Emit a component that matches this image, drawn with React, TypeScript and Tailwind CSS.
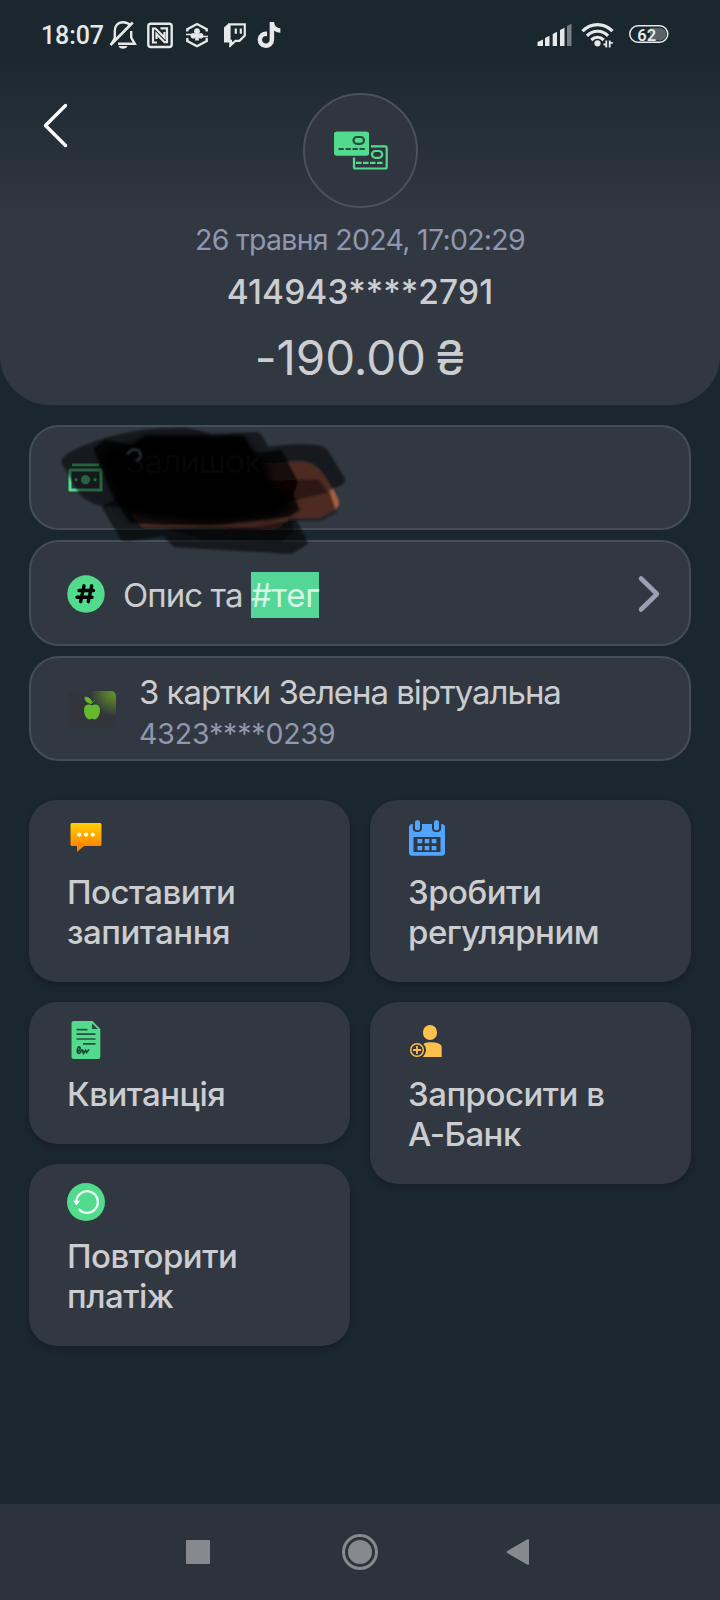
import type { ReactNode } from "react";
import { FaTiktok, FaTwitch } from "react-icons/fa";

const StatusBar = () => {
  return (
    <div className="flex h-[70px] items-center pl-[41px] pr-[50px] text-[#e6e8e9]">
      <span className="font-['Roboto',sans-serif] text-[25px] leading-[28px] font-medium tracking-[-0.1px] w-[66px] pt-[2px]">
        18:07
      </span>
      {/* Iconos de notificaciones */}
      <svg width="32" height="32" viewBox="107 19 32 32" fill="none" stroke="currentColor" strokeWidth="2.4">
        <path d="M131 25.500C128.500 23.200 126 22.200 123 22.200C117.600 22.200 114.800 26.200 114.800 31V38L112 43.400" />
        <path d="M131.200 31V37.500L134.800 43.800H118" />
        <path d="M110.500 45L132.800 22.500" strokeWidth="2.700" />
        <path d="M118.500 46H127.500C126.500 49.600 119.500 49.600 118.500 46Z" fill="currentColor" stroke="none" />
      </svg>
      <svg className="ml-[6px]" width="30" height="30" viewBox="145 19 30 30" fill="none" stroke="currentColor">
        <rect x="148.300" y="22.800" width="23.400" height="23.200" rx="2.500" strokeWidth="2.400" />
        <path d="M157 41.500H153V27.500H155.500L164.500 36.500V31" strokeWidth="2.200" />
        <path d="M160.500 27.300H167V41.200H164.500L156.500 33V38" strokeWidth="2.200" />
      </svg>
      <svg className="ml-[8px]" width="28" height="28" viewBox="183 20 28 28" fill="none" stroke="currentColor">
        <path d="M187.300 30.500V28.200L197 23L206.700 28.200V30.500M187.300 37V40L197 45.200L206.700 40V37" strokeWidth="2.400" />
        <g fill="currentColor" stroke="none">
          <circle cx="197" cy="30.200" r="2.900" />
          <circle cx="193.400" cy="34.800" r="2.800" />
          <circle cx="200.600" cy="34.800" r="2.800" />
          <path d="M196 31H198L199 39.500H195ZM186 32.800H192V34.300H186ZM202 34.800H208V36.300H202Z" />
        </g>
      </svg>
      <svg className="ml-[11px]" width="26" height="28" viewBox="220 20 26 28" fill="none" stroke="currentColor">
        <path d="M227.500 23.300H242.800V34.500L237.500 39.800H233.500L229 44V39.800H227.500Z" strokeWidth="2.200" />
        <path d="M227 22L222 26.500V41.500H227.200V46.700L233 41H227Z" fill="currentColor" stroke="none" />
        <path d="M233.800 27.500V32.800M238.800 27.500V32.800" strokeWidth="2.200" />
      </svg>
      <FaTiktok className="ml-[8px]" size={26} />

      <svg className="ml-auto" width="136" height="30" viewBox="534 20 136 30" fill="none">
        <g fill="currentColor">
          <path d="M537.500 42L543 39.500V46H537.500ZM545 38L549.500 35.700V46H545ZM552.700 34L557 31.700V46H552.700ZM560 30L564.500 27.700V46H560Z" />
          <path d="M567 26L571.500 23.700V46H567Z" opacity=".45" />
          <circle cx="597.500" cy="43.300" r="3.100" />
        </g>
        <path
          d="M582.500 31.200C591 22.400 604 22.400 612.500 31.200M587 35.800C593 29.700 602 29.700 608 35.800M591.300 40C595 36.500 600 36.500 603.700 40"
          stroke="currentColor"
          strokeWidth="3.200"
        />
        <path d="M606.300 40.500V47.500M609.700 40.500V47.500M603.500 44.500H606.300M609.700 42.800H612.800" stroke="currentColor" strokeWidth="1.800" />
        <path d="M650 28H660A6.300 6.300 0 0 1 660 40.600H650Z" fill="#5a6268" />
        <rect x="629.800" y="25.800" width="38" height="16.400" rx="8.200" stroke="currentColor" strokeWidth="1.500" />
        <text x="637.300" y="40.800" fill="currentColor" fontFamily="Roboto, sans-serif" fontSize="16.500" fontWeight="600">
          62
        </text>
      </svg>
    </div>
  );
};

const CardsIcon = () => {
  return (
    <svg className="mb-[2px]" width="56" height="40" viewBox="333 130 56 40" fill="none" stroke="#52db8c">
      <rect x="354" y="146.300" width="32.700" height="22.200" rx="1.500" strokeWidth="2.200" />
      <rect x="372" y="151" width="10.200" height="6.800" rx="3.400" strokeWidth="2.200" />
      <path d="M356 162.800H384" strokeWidth="2.200" strokeDasharray="5.500 1.500" />
      <rect x="333.200" y="130.700" width="36.800" height="25.700" rx="3" fill="#52db8c" stroke="#30363f" strokeWidth="2" />
      <rect x="334.200" y="131.700" width="34.800" height="23.700" rx="2.500" fill="#52db8c" stroke="none" />
      <rect x="353.500" y="137" width="10.500" height="6.800" rx="3.400" stroke="#294b45" strokeWidth="2.200" />
      <path d="M338.500 149H366" stroke="#294b45" strokeWidth="2.200" strokeDasharray="5.300 1.700" />
    </svg>
  );
};

const Header = () => {
  return (
    <header className="flex h-[405px] flex-col rounded-b-[50px] bg-linear-to-b from-[#1b272e] from-[50px] to-[#313841] to-[225px]">
      <StatusBar />
      <div className="mt-[23px] grid h-[115px] grid-cols-[303px_115px]">
        <button className="ml-[42px] mt-[9px] h-[48px] w-[28px]">
          <svg width="28" height="48" viewBox="42 102 28 48" fill="none" stroke="#fff" strokeWidth="3.4" strokeLinecap="round" strokeLinejoin="round">
            <path d="M65.500 105.500L45.500 125.500L65.500 145.500" />
          </svg>
        </button>
        <div className="flex items-center justify-center rounded-full border-2 border-[#4a505c] bg-[#30363f]">
          <CardsIcon />
        </div>
      </div>
      <p className="mt-[14px] text-center text-[28.5px] leading-[36px] tracking-[-0.7px] text-[#9097ae]">
        26 травня 2024, 17:02:29
      </p>
      <p className="mt-[14px] text-center text-[33.5px] leading-[40px] font-medium tracking-[0.1px]">
        414943****2791
      </p>
      <p className="mt-[18px] text-center text-[47.5px] leading-[56px] tracking-[-0.1px] [word-spacing:-4px]">
        -190.00 ₴
      </p>
    </header>
  );
};

const Row = ({ children }: { children: ReactNode }) => {
  return (
    <div className="flex h-[105.3px] items-center rounded-[30px] border-2 border-[#454d57] bg-[#313841] pl-[36px] pr-[28px]">
      {children}
    </div>
  );
};

const MoneyIcon = () => {
  return (
    <svg width="38" height="38" viewBox="0 0 38 38" fill="#52db8c">
      <rect x="5" y="4.500" width="27" height="2.800" />
      <path fillRule="evenodd" d="M3 9.500H34Q35.500 9.500 35.500 11V31Q35.500 32.500 34 32.500H3Q1.500 32.500 1.500 31V11Q1.500 9.500 3 9.500ZM4.500 12.500V29.500H32.500V12.500Z" />
      <circle cx="18.500" cy="20.700" r="4.600" />
      <circle cx="9" cy="20.700" r="1.600" />
      <circle cx="28" cy="20.700" r="1.600" />
    </svg>
  );
};

/* Trazos de marcador que tapan el saldo */
const Scribble = () => {
  return (
    <svg className="pointer-events-none absolute -top-[15px] -left-[9px]" width="350" height="150" viewBox="0 0 1050 450">
      <defs>
        <filter id="soft" x="-20%" y="-20%" width="140%" height="140%">
          <feGaussianBlur stdDeviation="2.500" />
        </filter>
        <filter id="softer" x="-20%" y="-20%" width="140%" height="140%">
          <feGaussianBlur stdDeviation="12" />
        </filter>
      </defs>
      <g filter="url(#soft)">
        <path d="M124 158Q125 140 150 125Q220 90 300 72Q400 50 500 54Q545 60 575 75L700 66Q722 66 728 80L745 110Q820 98 890 105Q915 107 926 125L975 205Q978 218 965 225Q900 255 830 270L700 290L255 290Q215 285 180 255Z" fill="#000" opacity=".54" />
        <path d="M245 290L300 385Q305 395 330 392Q380 388 430 378L462 412L760 428Q800 435 820 430L865 400L820 312L700 250L330 240Z" fill="#000" opacity=".56" />
        <path d="M780 318L895 325L955 290L948 308L905 333H805Z" fill="#14191d" opacity=".6" />
        <path d="M720 160L850 154Q890 162 912 195L955 268Q962 288 940 303L895 324H810L775 354Q740 362 700 352H375Q350 345 335 310L500 200Z" fill="#4e2c22" />
        <path d="M928 240L940 238L956 270Q960 288 946 298Z" fill="#a5603f" />
        <path d="M218 115L255 90L340 105L375 78L672 78L700 130L785 120L835 215L820 255L840 300L810 320L600 345L530 345H430L330 340L300 290Q260 240 250 180Z" fill="#000" opacity=".72" />
        <path d="M700 212L895 208L923 248L820 272L700 290Z" fill="#000" opacity=".42" />
        <path d="M430 355L700 350L818 330L820 365L785 395L550 390Z" fill="#000" opacity=".45" />
      </g>
      <path d="M240 145L265 105L340 112L380 85L665 85L700 130L745 175L740 220L810 255L825 295L760 325L560 340L400 325L310 300Z" fill="#000" opacity=".9" filter="url(#softer)" />
      <path d="M300 120L380 85H660L730 170L770 300L560 330L330 300Z" fill="#000" filter="url(#softer)" />
      <text x="314" y="190" fontSize="100" letterSpacing="-3" fill="#090b0d" opacity=".6">
        Залишок
      </text>
      <path d="M321 133Q333 117 347 119Q362 121 362 139Q361 149 348 152" fill="none" stroke="#33393d" strokeWidth="6" filter="url(#soft)" />
    </svg>
  );
};

const Details = () => {
  return (
    <section className="relative mx-[29px] mt-5 flex flex-col gap-[10.2px]">
      <Row>
        <MoneyIcon />
      </Row>
      <Row>
        <svg className="mt-px" width="38" height="38" viewBox="0 0 38 38" fill="none">
          <circle cx="19" cy="19" r="18.700" fill="#52db8c" />
          <path d="M17 10.800L13.600 26.700M24.700 10.800L21.300 26.700M12 15.500H26.500M10 22.300H25" stroke="#000" strokeWidth="3.400" strokeLinecap="round" />
        </svg>
        <p className="ml-[18px] mt-[4px] text-[33px] leading-[46px] tracking-[-0.95px]">
          Опис та <span className="inline-block bg-[#54d699] tracking-[-0.2px] text-[#d4f7e5]">#тег</span>
        </p>
        <svg className="mt-px ml-auto" width="24" height="40" viewBox="637 574 24 40" fill="none" stroke="#9a9fb3" strokeWidth="4.600" strokeLinecap="round" strokeLinejoin="round">
          <path d="M641 578.500L657 594L641 609.500" />
        </svg>
      </Row>
      <Row>
        <svg width="50" height="36" viewBox="0 0 50 36">
          <defs>
            <radialGradient id="card" cx="1" cy="0" r=".55" gradientTransform="translate(1 0) scale(1 1.300) translate(-1 0)">
              <stop offset="0" stopColor="#659a29" />
              <stop offset=".4" stopColor="#55772e" />
              <stop offset="1" stopColor="#32363c" />
            </radialGradient>
          </defs>
          <rect x="1" y="0" width="48" height="36" rx="5" fill="url(#card)" />
          <path d="M25 14.500C28 12.500 33 13.500 33 19C33 24 30 28.500 27.500 28.500C26 28.500 26 27.800 25 27.800C24 27.800 24 28.500 22.500 28.500C20 28.500 17 24 17 19C17 13.500 22 12.500 25 14.500Z" fill="#66b82e" />
          <path d="M24.500 12.500C19.500 12 18 9.500 18 6C22.500 6.500 25 8.500 24.500 12.500ZM25 12L27.500 9.500" fill="#66b82e" stroke="#66b82e" strokeWidth=".8" />
        </svg>
        <div className="ml-[22px] mt-[9px]">
          <p className="text-[33px] leading-[42px] tracking-[-1.05px]">
            З картки Зелена віртуальна
          </p>
          <p className="text-[28.5px] leading-[42px] tracking-[-0.15px] text-[#9097ae]">
            4323****0239
          </p>
        </div>
      </Row>
      <Scribble />
    </section>
  );
};

const Tile = ({ icon, children }: { icon: ReactNode; children: ReactNode }) => {
  return (
    <div className="rounded-[28px] bg-[#313841] pt-[19px] pr-4 pb-[30px] pl-[38px] shadow-[0_3px_6px_rgba(0,0,0,0.22)]">
      {icon}
      <p className="mt-[15px] text-[33px] leading-[40px] font-medium tracking-[-0.5px]">
        {children}
      </p>
    </div>
  );
};

const ChatIcon = () => {
  return (
    <svg width="38" height="38" viewBox="0 0 38 38">
      <defs>
        <linearGradient id="chat" x1="0" y1="0" x2="0" y2="1">
          <stop offset="0" stopColor="#ffd200" />
          <stop offset=".75" stopColor="#ff8a00" />
          <stop offset="1" stopColor="#f57c1a" />
        </linearGradient>
      </defs>
      <path d="M5 4H33Q34.500 4 34.500 5.500V25.500Q34.500 27 33 27H17L10 33V27H5Q3.500 27 3.500 25.500V5.500Q3.500 4 5 4Z" fill="url(#chat)" />
      <g fill="#fffbe0">
        <circle cx="12.200" cy="15.600" r="2.1" />
        <circle cx="19" cy="15.600" r="2.1" />
        <circle cx="25.800" cy="15.600" r="2.1" />
      </g>
    </svg>
  );
};

const CalendarIcon = () => {
  return (
    <svg width="38" height="38" viewBox="0 0 38 38" fill="#52a5ff">
      <rect x="1" y="5" width="36" height="31.700" rx="3.500" />
      <rect x="4.800" y="0" width="9.200" height="13" rx="4" fill="#313841" />
      <rect x="24" y="0" width="9.200" height="13" rx="4" fill="#313841" />
      <rect x="7" y="1.200" width="5" height="10" rx="2" />
      <rect x="26" y="1.200" width="5" height="10" rx="2" />
      <rect x="5.500" y="18" width="27" height="15" fill="#313841" />
      <path d="M9.500 20H14.200V24.200H9.500ZM16.700 20H21.300V24.200H16.700ZM23.700 20H28.400V24.200H23.700ZM9.500 27H14.200V31.200H9.500ZM16.700 27H21.300V31.200H16.700ZM23.700 27H28.400V31.200H23.700Z" />
    </svg>
  );
};

const ReceiptIcon = () => {
  return (
    <svg width="38" height="38" viewBox="0 0 38 38" fill="none">
      <path d="M6.500 0H25.500L33.300 8V36Q33.300 38 31.300 38H6.500Q4.500 38 4.500 36V2Q4.500 0 6.500 0Z" fill="#52db8c" />
      <path d="M25 2.500V8H31Z" fill="#25503f" />
      <path d="M9.500 8.700H20.500M9.500 13.200H28.500M9.500 18H28.500M16 22.800H28.500" stroke="#25503f" strokeWidth="1.700" />
      <path d="M9.500 31C12 31 14.500 27 12.500 26C10 25.500 9.500 32.500 12 32.500C14 32.500 14 28.500 15.500 29L16.500 32.300L18.500 29.500L19.500 31.500L22 28.500" stroke="#1f4537" strokeWidth="1.700" />
    </svg>
  );
};

const InviteIcon = () => {
  return (
    <svg width="38" height="38" viewBox="0 0 38 38" fill="#ffc04d">
      <rect x="15" y="4" width="14" height="15" rx="7" />
      <path d="M14 24.500Q16 21.300 22 21.300Q33.700 21.500 33.700 26V36H14Z" />
      <circle cx="9" cy="29" r="9" fill="#313841" />
      <circle cx="9" cy="29" r="6.300" fill="none" stroke="#ffc04d" strokeWidth="1.500" />
      <path d="M9 25V33M5 29H13" stroke="#ffc04d" strokeWidth="1.800" />
    </svg>
  );
};

const RepeatIcon = () => {
  return (
    <svg width="38" height="38" viewBox="0 0 38 38" fill="none">
      <circle cx="19" cy="19" r="19" fill="#52db8c" />
      <path d="M9.300 18.500A10.800 10.800 0 1 1 11.800 26" stroke="#eafff3" strokeWidth="2.300" />
      <path d="M6 17.800H13.200L9.600 22.500Z" fill="#fff" />
    </svg>
  );
};

const App = () => {
  return (
    <div className="flex h-[1600px] w-[720px] flex-col overflow-hidden bg-[#1b272e] font-['Inter',sans-serif] text-[#cbcdd0]">
      <Header />
      <Details />

      <section className="mx-[29px] mt-[38.7px] flex items-start gap-5">
        <div className="flex w-[321px] flex-col gap-5">
          <Tile icon={<ChatIcon />}>
            Поставити <br /> запитання
          </Tile>
          <Tile icon={<ReceiptIcon />}>Квитанція</Tile>
          <Tile icon={<RepeatIcon />}>
            Повторити <br /> платіж
          </Tile>
        </div>
        <div className="flex w-[321px] flex-col gap-5">
          <Tile icon={<CalendarIcon />}>
            Зробити <br /> регулярним
          </Tile>
          <Tile icon={<InviteIcon />}>
            Запросити в <br /> А-Банк
          </Tile>
        </div>
      </section>

      {/* Barra de navegacion */}
      <nav className="mt-auto flex h-24 items-center justify-between bg-[#2c333c] pr-[190px] pl-[186px]">
        <div className="h-6 w-6 rounded-[1px] bg-[#868a8e]"></div>
        <div className="ml-1 flex h-[36px] w-[36px] items-center justify-center rounded-full border-3 border-[#868a8e]">
          <div className="h-6 w-6 rounded-full bg-[#868a8e]"></div>
        </div>
        <svg width="24" height="28" viewBox="0 0 24 28" fill="#868a8e" stroke="#868a8e" strokeWidth="2" strokeLinejoin="round">
          <path d="M1.500 14L22 2V26Z" />
        </svg>
      </nav>
    </div>
  );
};

export default App;
